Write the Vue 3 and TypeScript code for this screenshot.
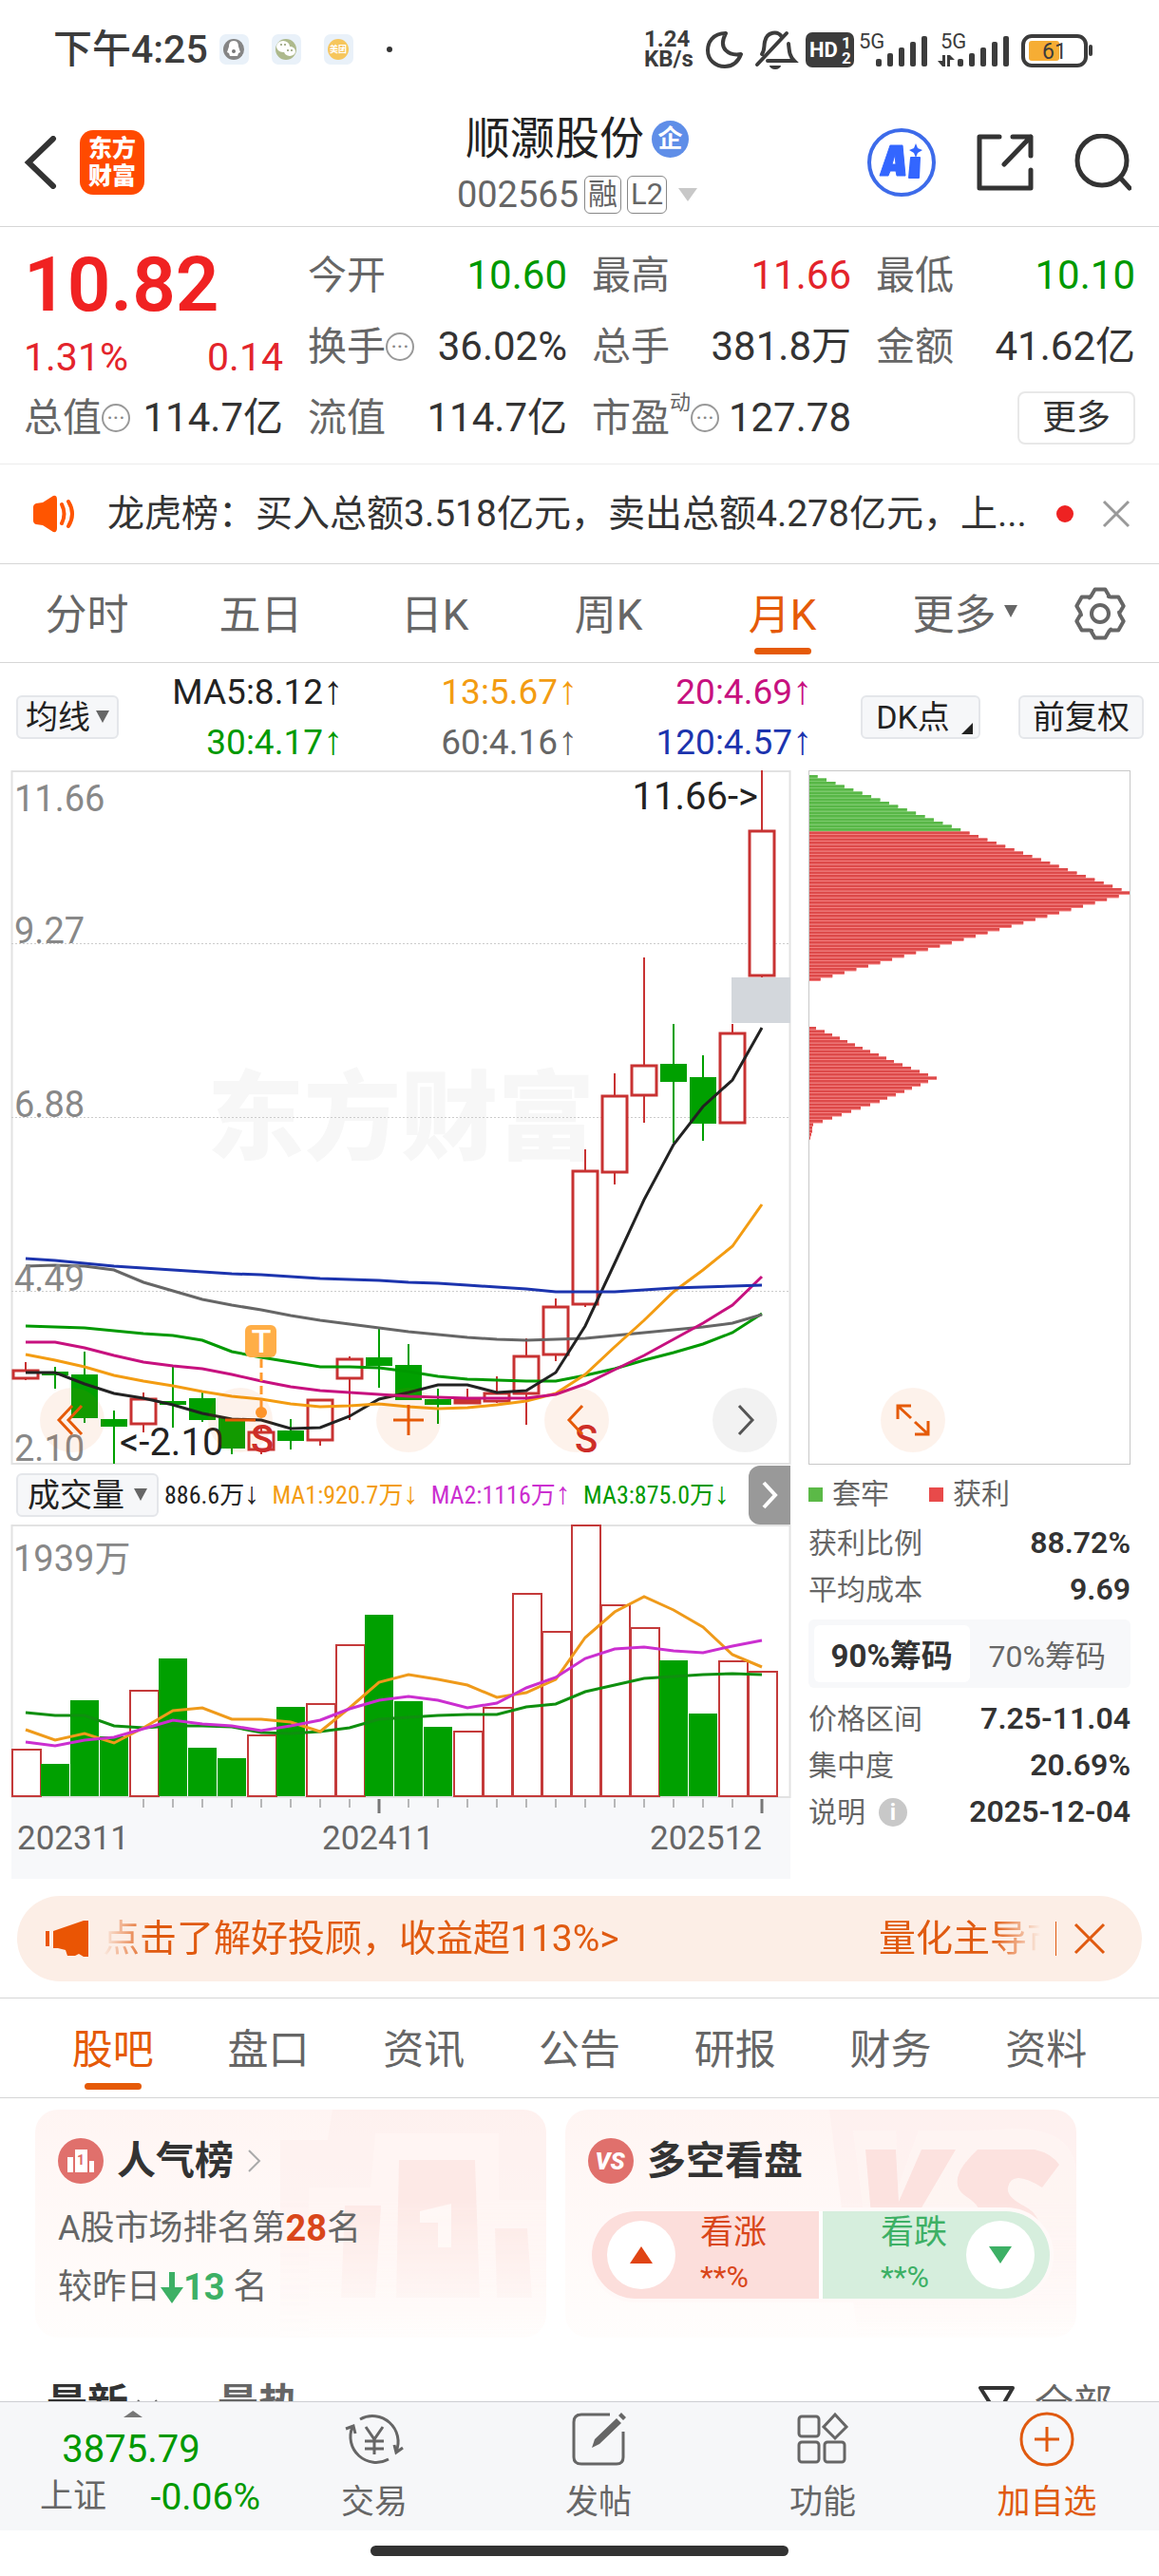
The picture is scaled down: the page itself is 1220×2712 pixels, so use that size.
<script setup lang="ts">
interface Candle {
  high: number
  low: number
  top: number
  bottom: number
  up: boolean
}
interface Series {
  color: string
  values: number[]
}

const STEP = 31
const centerX = (i: number): number => 15 + STEP * i
const toPoints = (values: number[]): string => values.map((v, i) => `${centerX(i)},${v}`).join(' ')

const candles: Candle[] = [
  [623, 642, 632, 640, 1], [628, 651, 634, 636, 0], [612, 687, 637, 681, 0], [674, 730, 684, 690, 0],
  [655, 697, 662, 688, 1], [626, 692, 665, 667, 0], [655, 686, 662, 683, 0], [683, 720, 683, 713, 0],
  [690, 720, 697, 715, 1], [683, 715, 696, 705, 0], [663, 711, 663, 705, 1], [617, 684, 620, 640, 1],
  [587, 650, 619, 626, 0], [604, 663, 627, 662, 0], [651, 688, 663, 667, 0], [651, 667, 663, 666, 1],
  [638, 666, 656, 664, 1], [598, 689, 617, 656, 1], [556, 622, 565, 615, 1], [399, 565, 422, 562, 1],
  [319, 436, 343, 423, 1], [197, 371, 311, 342, 1], [267, 392, 310, 327, 0], [300, 390, 324, 371, 0],
  [267, 371, 277, 371, 1], [0, 218, 64, 216, 1],
].map(([high, low, top, bottom, up]) => ({ high, low, top, bottom, up: up === 1 }))

const priceSeries: Series[] = [
  { color: '#009900', values: [585, 586, 587, 590, 593, 595, 600, 612, 618, 623, 628, 628, 629, 633, 638, 641, 642, 643, 643, 637, 630, 621, 613, 604, 592, 572] },
  { color: '#666666', values: [522, 521, 522, 526, 539, 548, 557, 563, 568, 574, 579, 583, 587, 591, 594, 597, 599, 600, 599, 598, 595, 592, 589, 586, 582, 573] },
  { color: '#222222', values: [634, 634, 646, 656, 661, 668, 677, 683, 684, 693, 692, 680, 662, 655, 647, 647, 655, 653, 634, 585, 519, 452, 394, 354, 326, 271] },
  { color: '#f39c12', values: [615, 621, 628, 637, 643, 648, 654, 659, 662, 667, 670, 669, 667, 670, 672, 671, 668, 664, 656, 636, 607, 579, 549, 526, 501, 457] },
  { color: '#c7117f', values: [602, 602, 608, 616, 623, 627, 630, 636, 643, 649, 653, 655, 657, 659, 660, 661, 661, 661, 657, 646, 631, 616, 599, 582, 563, 533] },
  { color: '#1c34ae', values: [514, 516, 519, 522, 524, 526, 528, 530, 531, 533, 535, 536, 537, 539, 540, 542, 544, 546, 549, 549, 549, 547, 545, 544, 543, 542] },
]

const volumeTops = [237, 253, 186, 224, 175, 142, 236, 247, 222, 193, 189, 127, 96, 187, 214, 218, 193, 73, 113, 1, 85, 109, 144, 200, 144, 155]
const volumeUp = 'rgggrgggrgrrgggrrrrrrrggrr'
const volumeBars = volumeTops.map((top, i) => ({ top, up: volumeUp[i] === 'r' }))
const volumeSeries: Series[] = [
  { color: '#0f8f0f', values: [198, 201, 201, 212, 214, 212, 212, 213, 219, 220, 218, 214, 205, 203, 201, 200, 200, 192, 189, 176, 169, 162, 160, 158, 157, 158] },
  { color: '#ef9a1a', values: [216, 227, 220, 230, 214, 196, 193, 205, 205, 208, 218, 193, 166, 158, 163, 169, 182, 177, 163, 119, 92, 76, 90, 108, 137, 150] },
  { color: '#cb2fd0', values: [229, 233, 227, 224, 215, 206, 210, 212, 217, 212, 206, 194, 185, 181, 185, 193, 188, 172, 161, 141, 131, 129, 133, 135, 128, 122] },
]
const ticks = Array.from({ length: 22 }, (_, k) => k + 4)

const chips: { y: number; w: number; green: boolean }[] = []
for (let k = 0; k <= 35; k++) chips.push({ y: 5 + 3.5 * k, w: 9.6 + 9.41 * k, green: k < 17 })
for (let k = 0; k < 26; k++) chips.push({ y: 131 + 3.5 * k, w: 326.7 - 12.56 * k, green: false })
const lower = [8, 17, 25, 33, 41, 49, 57, 65, 74, 82, 90, 99, 108, 117, 126, 135, 126, 118, 109, 101, 92, 83, 75, 65, 55, 45, 35, 25, 15, 5, 4, 4, 3, 2, 1]
lower.forEach((w, k) => chips.push({ y: 270 + 3.5 * k, w, green: false }))

// Six-toothed gear outline around (28, 28)
const gear = Array.from({ length: 6 }, (_, t) =>
  [[-34, 20], [-26, 21], [-12, 26], [12, 26], [26, 21]].map(([a, r]) => {
    const rad = ((t * 60 - 90 + a) * Math.PI) / 180
    return `${(28 + r * Math.cos(rad)).toFixed(1)},${(28 + r * Math.sin(rad)).toFixed(1)}`
  }).join(' '),
).join(' ')

const periods = ['分时', '五日', '日K', '周K', '月K', '更多']
const legends = [
  { text: 'MA5:8.12', color: '#222' }, { text: '13:5.67', color: '#f39c12' }, { text: '20:4.69', color: '#c7117f' },
  { text: '30:4.17', color: '#009900' }, { text: '60:4.16', color: '#666' }, { text: '120:4.57', color: '#1c34ae' },
]
const volumeLegends = [
  { text: '886.6万', arrow: '↓', color: '#222' },
  { text: 'MA1:920.7万', arrow: '↓', color: '#f39c12' },
  { text: 'MA2:1116万', arrow: '↑', color: '#cb2fd0' },
  { text: 'MA3:875.0万', arrow: '↓', color: '#009900' },
]
const sections = ['股吧', '盘口', '资讯', '公告', '研报', '财务', '资料']
const signal = [8, 14, 20, 26, 32]
</script>

<template>
  <div class="screen">
    <div class="scroller">
      <div class="status">
        <span class="clock">下午4:25</span>
        <svg class="apps" viewBox="0 0 190 40" width="190" height="40">
          <g fill="#e9f1f9"><rect x="0" y="4" width="31" height="32" rx="7" /><rect x="55" y="4" width="31" height="32" rx="7" /><rect x="110" y="4" width="31" height="32" rx="7" /></g>
          <circle cx="15" cy="20" r="11" fill="#858585" />
          <path d="M15 11c4 0 5 3 5 6l2 6-2 1-1 3h-8l-1-3-2-1 2-6c0-3 1-6 5-6z" fill="#fff" /><circle cx="15" cy="22" r="2" fill="#777" />
          <circle cx="70" cy="20" r="11" fill="#adb98c" />
          <ellipse cx="67" cy="17" rx="7" ry="6" fill="#fff" /><ellipse cx="74" cy="22" rx="6" ry="5" fill="#fff" />
          <g fill="#8f9b70"><circle cx="65" cy="15" r="1" /><circle cx="69" cy="15" r="1" /><circle cx="72" cy="21" r="1" /><circle cx="76" cy="21" r="1" /></g>
          <circle cx="125" cy="20" r="11" fill="#f6c65d" />
          <text x="125" y="23" font-size="9" font-weight="700" fill="#fff" text-anchor="middle">美团</text>
          <circle cx="179" cy="20" r="3" fill="#333" />
        </svg>
        <span class="grow"></span>
        <span class="speed">1.24<br />KB/s</span>
        <svg viewBox="0 0 420 44" width="420" height="44" fill="none" stroke="#3c3c3c">
          <path d="M28 5C14 5 9 15 9 23c0 10 8 17 18 17 8 0 14-5 17-13-12 2-25-5-16-22z" stroke-width="4" stroke-linejoin="round" />
          <path d="M72 34h28c-5-5-5-9-6-18M66 27c3-4 2-8 3-13 2-11 14-12 18-5M61 38L92 5" stroke-width="4" stroke-linecap="round" />
          <path d="M74 39h12a6 4 0 0 1-12 0z" fill="#3c3c3c" stroke="none" />
          <rect x="112" y="4" width="51" height="37" rx="7" fill="#3c3c3c" stroke="none" />
          <g fill="#fff" stroke="none" font-weight="700"><text x="116" y="30" font-size="22">HD</text><text x="150" y="21" font-size="17">1</text><text x="150" y="37" font-size="17">2</text></g>
          <g fill="#3c3c3c" stroke="none">
            <text x="168" y="21" font-size="22">5G</text><text x="254" y="21" font-size="22">5G</text>
            <rect v-for="(h, i) in signal" :key="'a' + i" :x="186 + i * 12" :y="40 - h" width="6" :height="h" rx="2" />
            <rect v-for="(h, i) in signal" :key="'b' + i" :x="272 + i * 12" :y="40 - h" width="6" :height="h" rx="2" />
            <path d="M256 40v-12h3v12zM251 34l5 6v-6zM261 28v12h3v-12zM269 33l-5-5v5z" />
          </g>
          <rect x="341" y="8" width="66" height="31" rx="9" stroke-width="4" />
          <rect x="347" y="13" width="32" height="21" rx="3" fill="#f6ad34" stroke="none" />
          <rect x="410" y="17" width="4" height="12" rx="2" fill="#3c3c3c" stroke="none" />
          <text x="374" y="32" font-size="23" fill="#3c3c3c" stroke="none" text-anchor="middle">61</text>
        </svg>
      </div>

      <header class="header">
        <div class="side">
          <button class="plain" aria-label="返回"><svg viewBox="0 0 36 56" width="36" height="56"><path d="M32 3L6 28l26 25" fill="none" stroke="#333" stroke-width="6" stroke-linecap="round" /></svg></button>
          <a class="logo" href="#">东方<br />财富</a>
        </div>
        <div class="stock">
          <h1>顺灏股份<span class="firm">企</span></h1>
          <div class="code">002565<span class="tag">融</span><span class="tag">L2</span><i class="down"></i></div>
        </div>
        <div class="side end">
          <button class="plain" aria-label="Ai">
            <svg viewBox="0 0 72 72" width="72" height="72"><circle cx="36" cy="36" r="34" fill="none" stroke="#3d6bea" stroke-width="4" /><path d="M13 50L24 18h13l3 32h-9l-1-5h-6l-2 5zM26 38h4l-1-10z" fill="#3366ff" fill-rule="evenodd" stroke="#3366ff" stroke-linejoin="round" /><path d="M46 31h9l-1 21H44z" fill="#3366ff" stroke="#3366ff" stroke-width="2" stroke-linejoin="round" /><path d="M51 16l2 5 5 2-5 3-2 5-2-5-5-3 5-2z" fill="#3366ff" /></svg>
          </button>
          <button class="plain" aria-label="分享">
            <svg viewBox="0 0 60 60" width="60" height="60" fill="none" stroke="#333" stroke-width="5" stroke-linecap="round" stroke-linejoin="round"><path d="M24 3H3v54h54V38M38 3h19v20M57 3L29 32" /></svg>
          </button>
          <button class="plain" aria-label="搜索">
            <svg viewBox="0 0 60 60" width="60" height="60" fill="none" stroke="#333" stroke-width="5" stroke-linecap="round"><circle cx="29" cy="28" r="26" /><path d="M48 46l10 11" /></svg>
          </button>
        </div>
      </header>

      <section class="quote">
        <div class="now">
          <strong>10.82</strong>
          <div class="pair red"><span>1.31%</span><span>0.14</span></div>
        </div>
        <div class="pair"><label>今开</label><span class="green">10.60</span></div>
        <div class="pair"><label>最高</label><span class="red">11.66</span></div>
        <div class="pair"><label>最低</label><span class="green">10.10</span></div>
        <div class="pair"><label>换手<i class="dots">···</i></label><span>36.02%</span></div>
        <div class="pair"><label>总手</label><span>381.8万</span></div>
        <div class="pair"><label>金额</label><span>41.62亿</span></div>
        <div class="pair"><label>总值<i class="dots">···</i></label><span>114.7亿</span></div>
        <div class="pair"><label>流值</label><span>114.7亿</span></div>
        <div class="pair"><label>市盈<sup>动</sup><i class="dots">···</i></label><span>127.78</span></div>
        <div class="pair end"><button class="more">更多</button></div>
      </section>

      <section class="news">
        <svg viewBox="0 0 46 40" width="46" height="40"><path d="M1 13q0-3 3-4l7-1L22 1q4-1 4 4v30q0 5-4 4l-11-7-7-1q-3-1-3-4z" fill="#ff5500" /><path d="M31 10q5 10 0 20M38 7q8 13 0 26" fill="none" stroke="#ff5500" stroke-width="4" stroke-linecap="round" /></svg>
        <a href="#">龙虎榜：买入总额3.518亿元，卖出总额4.278亿元，上...</a>
        <i class="dot"></i>
        <button class="plain" aria-label="关闭"><svg viewBox="0 0 30 30" width="30" height="30"><path d="M2 2l26 26M28 2L2 28" stroke="#999" stroke-width="3" /></svg></button>
      </section>

      <nav class="periods">
        <button v-for="p in periods" :key="p" :class="{ on: p === '月K' }">{{ p }}<i v-if="p === '更多'" class="caret"></i></button>
        <button class="gear" aria-label="设置"><svg viewBox="0 0 56 56" width="56" height="56" fill="none" stroke="#666" stroke-width="4" stroke-linejoin="round"><polygon :points="gear" /><circle cx="28" cy="28" r="9" /></svg></button>
      </nav>

      <section class="legend">
        <button class="chip">均线<i class="caret"></i></button>
        <div class="averages">
          <span v-for="l in legends" :key="l.text" :style="{ color: l.color }">{{ l.text }}<b>↑</b></span>
        </div>
        <button class="chip dk">DK点<i class="corner"></i></button>
        <button class="chip adjust">前复权</button>
      </section>

      <section class="charts">
        <div class="left">
          <div class="plot">
            <svg class="wide" viewBox="0 0 820 731">
              <text x="410" y="402" class="mark">东方财富</text>
              <rect x="0.5" y="1" width="819" height="729" fill="none" stroke="#e2e2e2" stroke-width="2" />
              <path d="M0 182.500H820M0 365.500H820M0 548.500H820" stroke="#ccc" stroke-dasharray="2 2" />
              <rect x="758" y="218" width="62" height="48" fill="#d3d7dc" />
              <g v-for="(c, i) in candles" :key="i" :stroke="c.up ? '#c83232' : '#00a000'" :stroke-width="c.up ? 3 : 2">
                <path :d="`M${centerX(i)} ${c.high}V${c.top}M${centerX(i)} ${c.bottom}V${c.low}`" stroke-width="2" />
                <rect :x="centerX(i) - 13" :y="c.top" width="26" :height="c.bottom - c.top" :fill="c.up ? '#fff' : '#00a000'" />
              </g>
              <polyline v-for="s in priceSeries" :key="s.color" :points="toPoints(s.values)" :stroke="s.color" fill="none" stroke-width="3" />
              <path d="M263 620V672" stroke="#ff9a2e" stroke-width="3" stroke-dasharray="9 5" />
              <circle cx="263" cy="676" r="6" fill="#ff9a2e" />
              <rect x="246" y="584" width="33" height="34" rx="6" fill="#ffae47" />
              <text x="263" y="613" text-anchor="middle" font-size="34" font-weight="500" fill="#fff">T</text>
              <g class="scale"><text x="3" y="43">11.66</text><text x="3" y="182">9.27</text><text x="3" y="365">6.88</text><text x="3" y="548">4.49</text><text x="3" y="727">2.10</text></g>
              <g font-size="40" fill="#222"><text x="786" y="41" text-anchor="end">11.66-&gt;</text><text x="114" y="721">&lt;-2.10</text></g>
              <g font-size="40" font-weight="500" fill="#cc2b2b" text-anchor="middle"><text x="264" y="718">S</text><text x="605" y="718">S</text></g>
            </svg>
            <div class="controls">
              <button aria-label="最左"><svg viewBox="0 0 68 68"><path d="M34 19L20 34l14 15M44 19L30 34l14 15" /></svg></button>
              <button aria-label="缩小"><svg viewBox="0 0 68 68"><path d="M18 34h32" /></svg></button>
              <button aria-label="放大"><svg viewBox="0 0 68 68"><path d="M18 34h32M34 18v32" /></svg></button>
              <button aria-label="左移"><svg viewBox="0 0 68 68"><path d="M40 19L26 34l14 15" /></svg></button>
              <button class="grey" aria-label="右移"><svg viewBox="0 0 68 68"><path d="M28 19l14 15-14 15" /></svg></button>
            </div>
          </div>

          <div class="volhead">
            <button class="chip">成交量<i class="caret"></i></button>
            <div class="vols"><span v-for="v in volumeLegends" :key="v.text" :style="{ color: v.color }">{{ v.text }}<b>{{ v.arrow }}</b></span></div>
            <button class="next" aria-label="展开"><svg viewBox="0 0 24 34" width="24" height="34"><path d="M6 4l12 13L6 30" fill="none" stroke="#fff" stroke-width="4" /></svg></button>
          </div>

          <svg class="wide" viewBox="0 0 820 373">
            <rect x="0" y="288" width="820" height="85" fill="#f7f8fa" />
            <rect x="0.5" y="1" width="819" height="286" fill="none" stroke="#e2e2e2" stroke-width="2" />
            <g v-for="(b, i) in volumeBars" :key="i">
              <rect v-if="b.up" :x="i * 31 + 1" :y="b.top" width="30" :height="286 - b.top" fill="#fff" stroke="#c43a3a" stroke-width="2" />
              <rect v-else :x="i * 31" :y="b.top - 1" width="30" :height="287 - b.top" fill="#00a000" />
            </g>
            <polyline v-for="s in volumeSeries" :key="s.color" :points="toPoints(s.values)" :stroke="s.color" fill="none" stroke-width="3" />
            <path v-for="t in ticks" :key="t" :d="`M${centerX(t)} 289V${t === 12 || t === 25 ? 304 : 298}`" stroke="#777" :stroke-width="t === 12 || t === 25 ? 3 : 1" />
            <text x="2" y="49" class="scale">1939万</text>
            <g class="dates"><text x="6" y="342">202311</text><text x="386" y="342" text-anchor="middle">202411</text><text x="790" y="342" text-anchor="end">202512</text></g>
          </svg>
        </div>

        <div class="right">
          <div class="plot">
            <svg class="wide" viewBox="0 0 339 731">
              <g v-for="(c, i) in chips" :key="i">
                <rect x="0" :y="c.y" :width="c.w" height="3.500" :fill="c.green ? '#7ccb6c' : '#f47f7f'" />
                <rect x="0" :y="c.y" :width="c.w" height="2.500" :fill="c.green ? '#58b747' : '#dd4a4a'" />
              </g>
              <rect x="0.5" y="0.5" width="338" height="730" fill="none" stroke="#c8c8c8" />
            </svg>
            <div class="controls expand">
              <button aria-label="全屏"><svg viewBox="0 0 68 68"><path d="M18 33V19h14M19 20l13 12M50 35v14H36M49 48L36 36" stroke-width="4" /></svg></button>
            </div>
          </div>
          <div class="keys"><span><i class="g"></i>套牢</span><span><i class="r"></i>获利</span></div>
          <dl>
            <div><dt>获利比例</dt><dd>88.72%</dd></div>
            <div><dt>平均成本</dt><dd>9.69</dd></div>
          </dl>
          <div class="switch"><button class="on">90%筹码</button><button>70%筹码</button></div>
          <dl>
            <div><dt>价格区间</dt><dd>7.25-11.04</dd></div>
            <div><dt>集中度</dt><dd>20.69%</dd></div>
            <div><dt>说明<i class="info">i</i></dt><dd>2025-12-04</dd></div>
          </dl>
        </div>
      </section>

      <section class="banner">
        <svg viewBox="0 0 46 40" width="46" height="40" fill="#ea5504"><path d="M0 12h4v16H0zM8 12L40 1h5v38h-5l-5-3-4 2h-8l-2-6-8-2H8z" /></svg>
        <a class="first" href="#">点击了解好投顾，收益超113%&gt;</a>
        <a class="second" href="#">量化主导市</a>
        <i class="bar"></i>
        <button class="plain" aria-label="关闭"><svg viewBox="0 0 34 34" width="34" height="34"><path d="M2 2l30 30M32 2L2 32" stroke="#e05a10" stroke-width="3" /></svg></button>
      </section>

      <nav class="sections">
        <button v-for="s in sections" :key="s" :class="{ on: s === '股吧' }">{{ s }}</button>
      </nav>

      <section class="cards">
        <article>
          <svg class="deco" viewBox="0 0 280 240">
            <path d="M55 0h225v240H0V32h50z" fill="#fdeeec" opacity=".5" /><path d="M100 25h130v70h50v145H30V82h65z" fill="#fff6f4" opacity=".7" />
            <path d="M125 53h80l5 145H122zM68 101h38l-6 97H64zM226 125h34l5 73h-37z" fill="#fce6e3" opacity=".8" />
            <path d="M147 107l33-8v46h-14v-26h-19z" fill="#fff7f5" />
          </svg>
          <h2><svg viewBox="0 0 48 48" width="48" height="48"><circle cx="24" cy="24" r="24" fill="#e0706c" /><path d="M10 20h6v16h-6zM18 12h13v24H18zM33 24h5v12h-5z" fill="#fff" /><text x="24" y="28" font-size="14" font-weight="700" fill="#de6a66" text-anchor="middle">1</text></svg>人气榜<svg viewBox="0 0 16 26" width="16" height="26"><path d="M2 2l11 11L2 24" fill="none" stroke="#aaa" stroke-width="2" /></svg></h2>
          <p>A股市场排名第<b class="hot">28</b>名</p>
          <p>较昨日<svg viewBox="0 0 24 34" width="24" height="34"><path d="M9 1h6v16h9L12 34 0 17h9z" fill="#3db065" /></svg><b class="cool">13</b> 名</p>
        </article>
        <article>
          <svg class="deco" viewBox="0 0 280 240">
            <path d="M20 0h260v240H50z" fill="#fdeeec" opacity=".6" />
            <path d="M45 22h45l2 60 22-60h50q20 0 50-2 66 0 66 50v70H60z" fill="#fff5f3" opacity=".7" />
            <path d="M58 42h32l3 55 24-55h36l-54 92H66zM176 42h60q18 4 26 16l-18 24q-32-20-36 0-2 10 18 20 22 12 12 38H130l18-30q32 14 30-2 0-8-16-18-20-16 14-48z" fill="#fce2df" />
          </svg>
          <h2><svg viewBox="0 0 48 48" width="48" height="48"><circle cx="24" cy="24" r="24" fill="#e0706c" /><text x="23" y="33" font-size="25" font-weight="900" font-style="italic" fill="#fff" text-anchor="middle">VS</text></svg>多空看盘</h2>
          <div class="versus">
            <button class="bull"><i></i><span>看涨<small>**%</small></span></button>
            <button class="bear"><span>看跌<small>**%</small></span><i></i></button>
          </div>
        </article>
      </section>

      <section class="feed">
        <b>最新</b><svg viewBox="0 0 24 16" width="24" height="16"><path d="M2 2l10 10L22 2" fill="none" stroke="#666" stroke-width="2" /></svg>
        <span class="hotest">最热</span>
        <span class="grow"></span>
        <svg viewBox="0 0 40 40" width="40" height="40"><path d="M3 3h34L26 22v14l-11-6v-8z" fill="none" stroke="#333" stroke-width="4" stroke-linejoin="round" /></svg>
        <span class="all">全部</span>
      </section>
    </div>

    <footer class="dock">
      <a class="index" href="#">
        <i></i>
        <strong>3875.79</strong>
        <span>上证<em>-0.06%</em></span>
      </a>
      <a href="#"><svg viewBox="0 0 64 60" width="64" height="60"><path d="M17 9a27 27 0 0 1 38 34M47 51A27 27 0 0 1 9 17M2 19l8-3 2 8M62 39l-7 5-2-8M23 17l9 13 9-13M32 30v16M22 32h20M22 40h20" /></svg>交易</a>
      <a href="#"><svg viewBox="0 0 60 60" width="60" height="60"><path d="M42 4H12q-8 0-8 8v37q0 7 8 7h37q7 0 7-7V22" /><path d="M23 39l3-9L49 8l5 5-23 22zM51 5l3-3 5 5-3 3z" fill="#666" stroke="none" /></svg>发帖</a>
      <a href="#"><svg viewBox="0 0 60 60" width="60" height="60"><rect x="5" y="6" width="21" height="21" rx="3" /><rect x="5" y="33" width="21" height="21" rx="3" /><rect x="32" y="33" width="21" height="21" rx="3" /><path d="M43 4l12 13-12 12-12-12z" /></svg>功能</a>
      <a class="add" href="#"><svg viewBox="0 0 60 60" width="60" height="60"><circle cx="30" cy="30" r="27" /><path d="M17 30h26M30 17v26" /></svg>加自选</a>
    </footer>
    <div class="home"><i></i></div>
  </div>
</template>

<style>
body { margin: 0; background: #fff; }
</style>

<style scoped>
* { box-sizing: border-box; }
.screen { height: 100vh; display: flex; flex-direction: column; background: #fff; color: #333; font-family: Roboto, "Noto Sans CJK SC", sans-serif; font-size: 42px; }
.scroller { flex: 1; min-height: 0; overflow: hidden; }
button { font: inherit; color: inherit; border: 0; background: none; padding: 0; cursor: pointer; }
a { color: inherit; text-decoration: none; }
i { font-style: normal; }
svg { display: block; flex: none; }
.grow { flex: 1; }
.plain { display: flex; }
.red { color: #e3242b; }
.green { color: #009900; }

.status { height: 104px; padding: 0 64px 0 56px; display: flex; align-items: center; color: #3c3c3c; }
.clock { font-size: 41px; line-height: 52px; font-weight: 500; }
.apps { margin-left: 12px; }
.speed { font-size: 24px; line-height: 21px; font-weight: 700; width: 58px; }

.header { height: 135px; padding: 0 29px 0 24px; display: flex; align-items: center; border-bottom: 1px solid #d6d6d6; }
.side { flex: 1; display: flex; align-items: center; gap: 24px; }
.side.end { justify-content: flex-end; gap: 43px; }
.logo { width: 68px; height: 68px; border-radius: 14px; background: #ff4a00; color: #fff; font-size: 25px; line-height: 29px; font-weight: 900; display: flex; align-items: center; justify-content: center; }
.stock { display: flex; flex-direction: column; align-items: center; gap: 10px; }
h1 { margin: 0; font-size: 47px; line-height: 58px; font-weight: 400; color: #222; display: flex; align-items: center; gap: 8px; }
.firm { width: 39px; height: 39px; border-radius: 50%; background: #5f8ee8; color: #fff; font-size: 26px; line-height: 38px; font-weight: 700; text-align: center; }
.code { height: 40px; display: flex; align-items: center; gap: 6px; font-size: 38px; line-height: 40px; color: #666; }
.tag { border: 1px solid #888; border-radius: 6px; height: 40px; min-width: 38px; padding: 0 3px; font-size: 31px; line-height: 38px; text-align: center; }
.down { margin-left: 6px; border: 10px solid transparent; border-top: 14px solid #c8c8c8; border-bottom: 0; }

.quote { display: grid; grid-template-columns: repeat(4, 1fr); grid-template-rows: repeat(3, 75px); column-gap: 26px; padding: 13px 25px 11px; border-bottom: 1px solid #ececec; }
.now { grid-row: span 2; }
.now strong { display: block; font-size: 80px; line-height: 96px; font-weight: 600; color: #f02222; }
.now .pair { font-size: 41px; }
.pair { display: flex; justify-content: space-between; align-items: center; line-height: 56px; white-space: nowrap; }
.pair.end { justify-content: flex-end; }
.pair label { display: flex; align-items: center; color: #666; font-size: 41px; }
.pair sup { font-size: 22px; line-height: 24px; align-self: flex-start; }
.dots { width: 30px; height: 30px; border: 2px solid #999; border-radius: 50%; font-size: 24px; line-height: 26px; color: #888; display: flex; justify-content: center; }
.more { width: 124px; height: 56px; border: 2px solid #e8e8e8; border-radius: 8px; font-size: 36px; line-height: 50px; }

.news { height: 105px; padding: 0 30px 0 34px; display: flex; align-items: center; border-bottom: 1px solid #d6d6d6; }
.news a { flex: 1; margin-left: 33px; font-size: 39px; line-height: 50px; white-space: nowrap; }
.dot { width: 18px; height: 18px; border-radius: 50%; background: #ee2222; margin-right: 30px; }

.periods { height: 104px; display: grid; grid-template-columns: repeat(6, 3fr) 2fr; border-bottom: 1px solid #d6d6d6; color: #666; font-size: 44px; }
.periods button { position: relative; display: flex; align-items: center; justify-content: center; padding-bottom: 4px; }
.on { color: #e55a08; }
.periods .on::after, .sections .on::after { content: ""; position: absolute; left: 50%; bottom: 8px; width: 60px; height: 7px; margin-left: -30px; border-radius: 4px; background: #e55a08; }
.caret { margin-left: 8px; border: 7px solid transparent; border-top: 13px solid #666; border-bottom: 0; }
.periods .caret { margin-right: -18px; }
.periods .gear { justify-content: flex-start; padding: 0 0 0 32px; }

.legend { height: 113px; padding: 0 16px 0 17px; display: flex; align-items: center; }
.chip { height: 46px; padding: 0 8px; display: flex; align-items: center; justify-content: center; border: 2px solid #e4e6ea; border-radius: 6px; background: #f6f7f9; font-size: 34px; line-height: 42px; color: #222; white-space: nowrap; }
.chip .caret { margin-left: 6px; }
.averages { width: 730px; display: grid; grid-template-columns: 236fr 247fr 247fr; font-size: 37px; line-height: 53px; text-align: right; }
.averages b, .vols b { font-family: "Liberation Sans", sans-serif; font-weight: 400; line-height: 1; }
.averages b { font-size: 42px; }
.vols b { font-size: 32px; }
.dk { width: 126px; margin-left: auto; margin-right: 40px; padding: 0 0 0 8px; }
.adjust { width: 132px; }
.corner { align-self: flex-end; margin: 0 0 3px 12px; border-left: 12px solid transparent; border-bottom: 12px solid #222; }

.charts { display: flex; gap: 19px; padding: 0 30px 0 12px; align-items: flex-start; }
.left { flex: 820 1 0; min-width: 0; }
.right { flex: 339 1 0; min-width: 0; }
.wide { width: 100%; height: auto; overflow: visible; }
.plot { position: relative; }
.mark { font-size: 102px; font-weight: 900; fill: #f7f7f7; text-anchor: middle; }
.scale { font-size: 38px; fill: #888; }
.dates { font-size: 35px; fill: #666; }
.controls { position: absolute; left: 30px; right: 14px; bottom: 13px; display: flex; justify-content: space-between; }
.controls.expand { left: 76px; }
.controls button { width: 68px; height: 68px; border-radius: 50%; background: rgba(234, 85, 4, 0.08); }
.controls path { fill: none; stroke: #e55a08; stroke-width: 3; }
.controls .grey { background: rgba(0, 0, 0, 0.05); }
.controls .grey path { stroke: #555; }
.volhead { height: 63px; padding-left: 5px; display: flex; align-items: center; }
.volhead .chip { width: 150px; flex: none; }
.volhead .chip .caret { margin-left: 10px; }
.vols { flex: 1; margin: 0 20px 0 6px; display: flex; justify-content: space-between; font-family: "Roboto Condensed", "Liberation Sans Narrow", Roboto, "Noto Sans CJK SC", sans-serif; font-size: 26px; line-height: 40px; white-space: nowrap; }
.next { width: 44px; height: 62px; flex: none; border-radius: 12px 0 0 12px; background: #999; display: flex; align-items: center; justify-content: center; }

.keys { height: 58px; padding-top: 4px; display: flex; align-items: center; font-size: 30px; line-height: 40px; color: #666; }
.keys span { width: 127px; display: flex; align-items: center; gap: 10px; }
.keys i { width: 15px; height: 15px; }
.keys .g { background: #5bb947; }
.keys .r { background: #e84a4a; }
dl { margin: 0; font-size: 30px; line-height: 49px; }
dl div { display: flex; justify-content: space-between; }
dt { display: flex; align-items: center; color: #666; }
dd { margin: 0; font-size: 32px; font-weight: 600; }
.info { width: 30px; height: 30px; margin-left: 14px; border-radius: 50%; background: #c8c8c8; color: #fff; font-size: 24px; line-height: 30px; font-weight: 700; text-align: center; }
.switch { height: 72px; margin: 7px 0 8px; padding: 6px; display: flex; border-radius: 6px; background: #f7f8fa; font-size: 32px; color: #666; }
.switch button { flex: 1; border-radius: 6px; white-space: nowrap; }
.switch .on { background: #fff; color: #333; font-weight: 700; font-size: 33px; }

.banner { height: 90px; margin: 18px 18px 17px; padding: 0 38px 0 30px; display: flex; align-items: center; border-radius: 45px; background: #fceee6; color: #e05a10; font-size: 39px; line-height: 50px; white-space: nowrap; }
.banner .first { margin-left: 14px; flex: 1; -webkit-mask-image: linear-gradient(to right, transparent, #000 50px); mask-image: linear-gradient(to right, transparent, #000 50px); }
.banner .second { width: 170px; overflow: hidden; -webkit-mask-image: linear-gradient(to left, transparent, #000 50px); mask-image: linear-gradient(to left, transparent, #000 50px); }
.bar { width: 1px; height: 36px; margin: 0 18px 0 16px; background: #e05a10; }

.sections { height: 106px; padding: 0 37px; display: flex; border: 1px solid #d6d6d6; border-width: 1px 0; color: #666; font-size: 43px; }
.sections button { position: relative; flex: 1; padding-bottom: 4px; }
.sections .on { color: #e55a08; }

.cards { display: flex; gap: 20px; padding: 12px 87px 0 37px; }
.cards article { position: relative; flex: 1; height: 240px; padding: 24px 24px 0; border-radius: 24px; overflow: hidden; background: linear-gradient(#fff5f3, #fffdfc); }
.deco { position: absolute; top: 0; right: 0; height: 240px; -webkit-mask-image: linear-gradient(#000 40%, transparent); mask-image: linear-gradient(#000 40%, transparent); }
h2 { position: relative; margin: 0 0 13px; height: 60px; display: flex; align-items: center; gap: 14px; font-size: 41px; line-height: 60px; font-weight: 600; }
p { position: relative; margin: 0 0 6px; display: flex; align-items: center; font-size: 36px; line-height: 56px; color: #666; white-space: pre; }
p b { font-size: 38px; }
.hot { color: #d9461a; }
.cool { color: #3db065; }
.versus { position: relative; height: 100px; margin: 19px 0 0; display: flex; gap: 4px; border: 4px solid #fff9f8; border-radius: 50px; overflow: hidden; background: #fff; }
.versus button { flex: 1; display: flex; align-items: center; gap: 26px; padding: 0 16px; font-size: 35px; line-height: 44px; text-align: left; }
.versus small { display: block; font-size: 32px; line-height: 44px; padding-top: 2px; }
.versus i { width: 72px; height: 72px; border-radius: 50%; background: #fff; display: flex; align-items: center; justify-content: center; }
.bull { background: #fcdedb; color: #d9461a; }
.bear { background: #d6eedd; color: #3db065; }
.versus .bear { justify-content: flex-end; gap: 20px; }
.bull i::after { content: ""; border: 12px solid transparent; border-bottom: 18px solid #e04414; border-top: 0; }
.bear i::after { content: ""; border: 12px solid transparent; border-top: 18px solid #3db065; border-bottom: 0; }

.feed { height: 120px; margin-top: 40px; padding: 0 49px; display: flex; align-items: flex-start; font-size: 43px; line-height: 60px; color: #666; }
.feed b { color: #333; }
.feed svg { margin: 24px 0 0 8px; }
.feed .grow + svg { margin: 10px 20px 0 0; }
.hotest { margin-left: 62px; font-weight: 600; }
.feed .all { font-size: 41px; }

.dock { position: relative; height: 136px; flex: none; display: grid; grid-template-columns: 276fr repeat(4, 236fr); background: #f6f7f9; border-top: 1px solid #ccced2; color: #666; font-size: 35px; line-height: 44px; }
.dock a { display: flex; flex-direction: column; align-items: center; padding-top: 9px; }
.dock a svg { height: 60px; margin-bottom: 15px; fill: none; stroke: #666; stroke-width: 3; }
.dock .add { color: #e05a10; }
.dock .add svg { stroke: #e05a10; }
.dock .index i { border: 10px solid transparent; border-bottom: 7px solid #777; border-top: 0; margin-left: 4px; }
.dock .index strong { font-size: 40px; line-height: 52px; margin: 8px 0 0; font-weight: 400; color: #009900; }
.dock .index span { display: flex; justify-content: space-between; width: 232px; margin-left: 42px; align-self: flex-start; line-height: 48px; }
.dock em { font-style: normal; font-size: 39px; color: #009900; }
.home { height: 48px; flex: none; padding-top: 16px; }
.home i { display: block; width: 36%; height: 11px; margin: 0 auto; border-radius: 6px; background: #333; }
</style>
